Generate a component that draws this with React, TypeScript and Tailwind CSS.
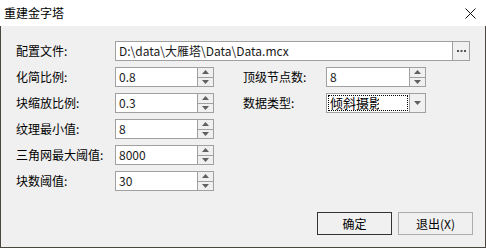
import React from "react";

const Up = () => (
  <svg width="7" height="4" viewBox="0 0 7 4">
    <path d="M3.5 0L7 4H0z" fill="#606060" />
  </svg>
);

const Down = () => (
  <svg width="7" height="4" viewBox="0 0 7 4">
    <path d="M0 0h7L3.5 4z" fill="#606060" />
  </svg>
);

function Spin({ value, w }: { value: string; w: string }) {
  return (
    <div className={`flex h-[20px] ${w}`}>
      <div className="flex-1 min-w-0 bg-white border border-[#a0a0a0] flex items-center pl-[3px] text-[#1a1a1a]">
        {value}
      </div>
      <div className="w-[16px] flex flex-col border border-l-0 border-[#a0a0a0] bg-[#f0f0f0]">
        <div className="flex-1 flex items-center justify-center border-b border-[#a0a0a0]">
          <Up />
        </div>
        <div className="flex-1 flex items-center justify-center">
          <Down />
        </div>
      </div>
    </div>
  );
}

function Label({ text, w }: { text: string; w: string }) {
  return <div className={`${w} shrink-0 whitespace-nowrap`}>{text}</div>;
}

export default function App() {
  return (
    <div className="w-[486px] h-[248px] flex flex-col font-['Noto_Sans_CJK_SC',sans-serif] text-[12px] leading-[16px] text-black">
      {/* title bar */}
      <div className="h-[26px] bg-white flex items-center justify-between pl-[4px] pr-[10px]">
        <span>重建金字塔</span>
        <svg width="11" height="11" viewBox="0 0 11 11" stroke="#111" strokeWidth="1">
          <path d="M0.5 0.5l10 10M10.5 0.5l-10 10" />
        </svg>
      </div>

      <div className="flex-1 bg-[#f0f0f0] border-x border-b border-[#4a4740] flex flex-col pt-[15px] pl-[15px] pr-[15px] pb-[12px]">
        <div className="flex flex-col gap-[6px]">
          <div className="flex items-center h-[20px]">
            <Label text="配置文件:" w="w-[99px]" />
            <div className="flex-1 h-[20px] bg-white border border-[#a0a0a0] flex items-center pl-[3px] text-[#1a1a1a]">
              D:\data\大雁塔\Data\Data.mcx
            </div>
            <div className="w-[17px] h-[20px] border border-l-0 border-[#a0a0a0] bg-[#f0f0f0] flex items-center justify-center">
              <svg width="9" height="2" viewBox="0 0 9 2">
                <rect x="0" y="0" width="2" height="2" fill="#555" />
                <rect x="3.5" y="0" width="2" height="2" fill="#555" />
                <rect x="7" y="0" width="2" height="2" fill="#555" />
              </svg>
            </div>
          </div>

          <div className="flex items-center h-[20px]">
            <Label text="化简比例:" w="w-[99px]" />
            <Spin value="0.8" w="w-[99px]" />
            <div className="w-[29px]" />
            <Label text="顶级节点数:" w="w-[83px]" />
            <Spin value="8" w="w-[100px]" />
          </div>

          <div className="flex items-center h-[20px]">
            <Label text="块缩放比例:" w="w-[99px]" />
            <Spin value="0.3" w="w-[99px]" />
            <div className="w-[29px]" />
            <Label text="数据类型:" w="w-[83px]" />
            <div className="flex w-[100px] h-[20px] bg-white border border-[#a0a0a0]">
              <div className="flex-1 p-[1px]">
                <div className="h-full border border-dotted border-black flex items-center pl-[1px] overflow-hidden">
                  <span className="w-[49px] overflow-hidden whitespace-nowrap text-[13px]">倾斜摄影</span>
                </div>
              </div>
              <div className="w-[16px] border-l border-[#a0a0a0] bg-[#f0f0f0] flex items-center justify-center">
                <Down />
              </div>
            </div>
          </div>

          <div className="flex items-center h-[20px]">
            <Label text="纹理最小值:" w="w-[99px]" />
            <Spin value="8" w="w-[99px]" />
          </div>

          <div className="flex items-center h-[20px]">
            <Label text="三角网最大阈值:" w="w-[99px]" />
            <Spin value="8000" w="w-[99px]" />
          </div>

          <div className="flex items-center h-[20px]">
            <Label text="块数阈值:" w="w-[99px]" />
            <Spin value="30" w="w-[99px]" />
          </div>
        </div>

        <div className="mt-auto flex justify-end gap-[6px] mr-[-3px]">
          <button className="w-[75px] h-[23px] border border-[#333] bg-[#f0f0f0] flex items-center justify-center">
            确定
          </button>
          <button className="w-[75px] h-[23px] border border-[#adadad] bg-[#f0f0f0] flex items-center justify-center">
            退出(X)
          </button>
        </div>
      </div>
    </div>
  );
}
